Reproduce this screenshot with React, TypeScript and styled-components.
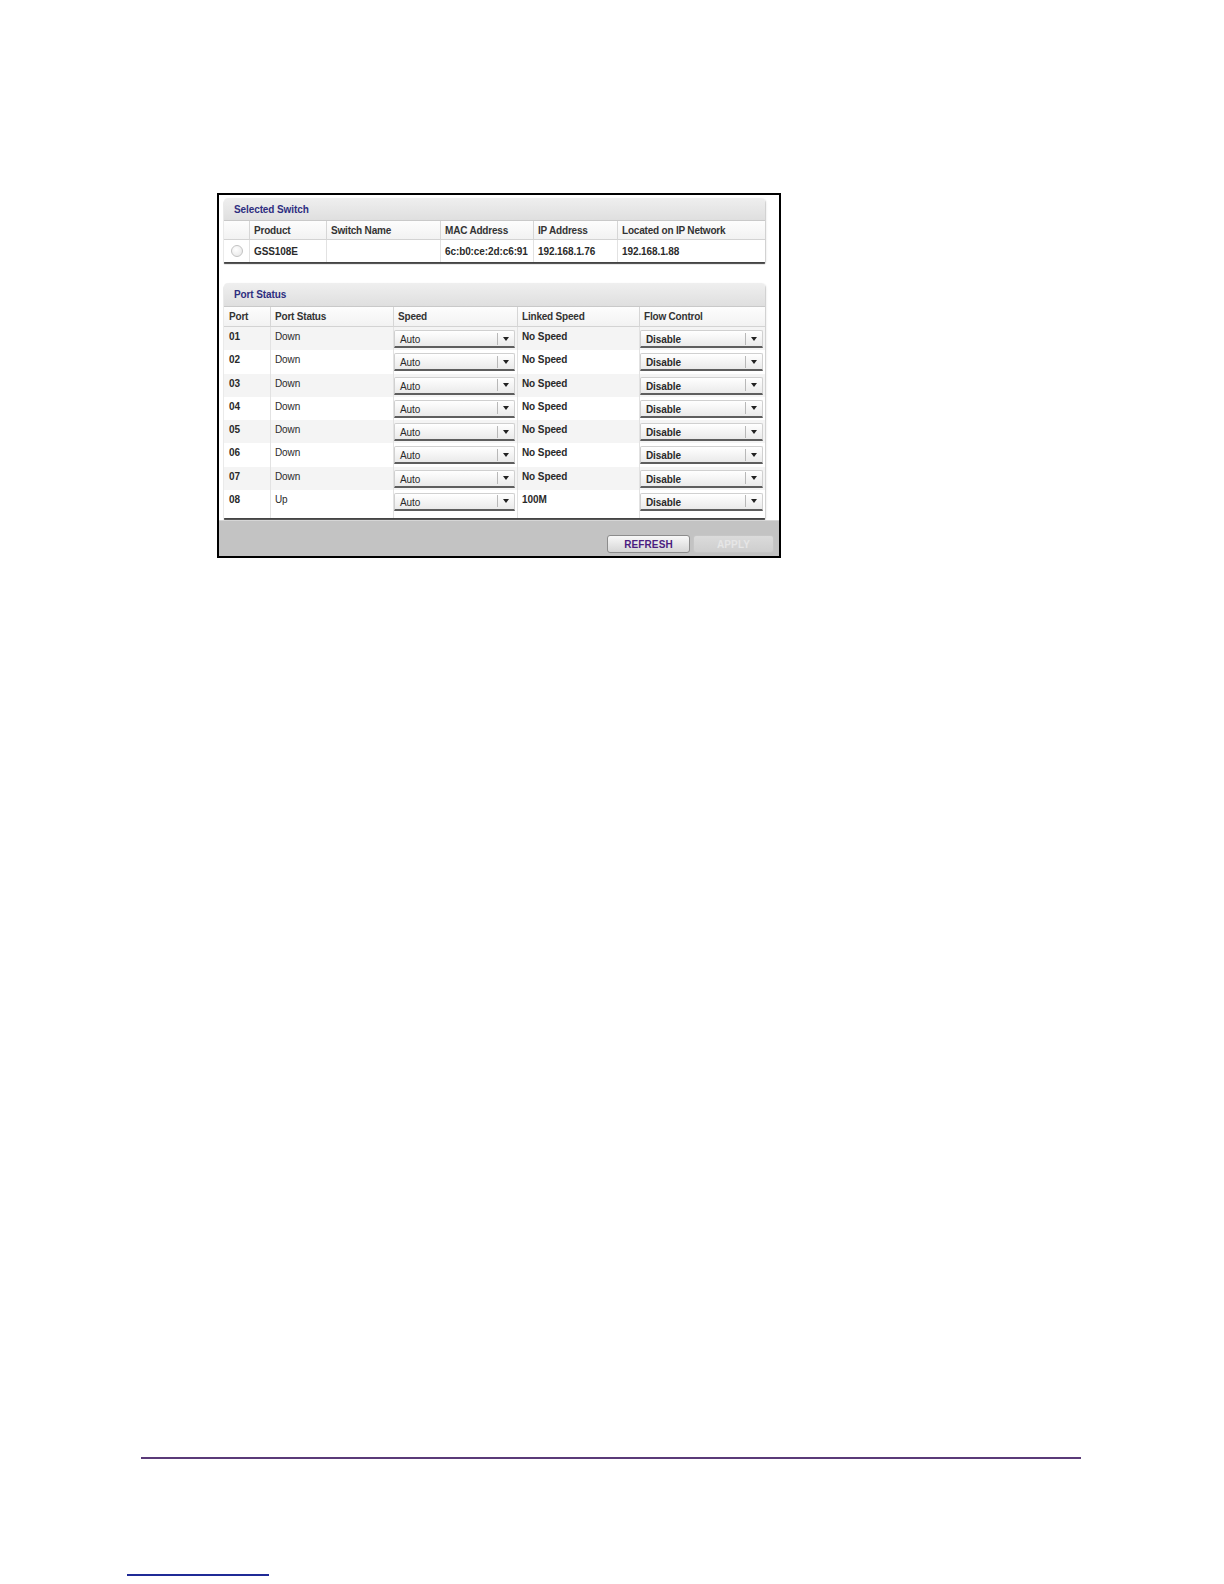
import React from 'react';
import styled, { createGlobalStyle } from 'styled-components';

const GlobalStyle = createGlobalStyle`
  html, body {
    margin: 0;
    padding: 0;
    background: #fff;
  }
  body {
    font-family: 'Liberation Sans', Arial, sans-serif;
  }
`;

const Page = styled.div`
  width: 1224px;
  height: 1584px;
  display: flex;
  flex-direction: column;
  box-sizing: border-box;
  padding-top: 193px;
`;

const Frame = styled.div`
  margin-left: 217px;
  width: 564px;
  height: 365px;
  box-sizing: border-box;
  border: 2px solid #000;
  display: flex;
  flex-direction: column;
  background: #fff;
`;

const Content = styled.div`
  flex: 1;
  display: flex;
  flex-direction: column;
  gap: 21px;
  padding: 3px 14px 0 5px;
`;

const Panel = styled.section`
  border-radius: 4px 4px 0 0;
  background: #fff;
  box-shadow: 0 2px 1px -0.5px rgba(50, 50, 50, 0.9), 1px 1px 2px rgba(0, 0, 0, 0.15);
  overflow: hidden;
`;

const PanelTitle = styled.div<{ $h?: number }>`
  height: ${({ $h }) => $h ?? 23}px;
  box-sizing: border-box;
  display: flex;
  align-items: center;
  padding-left: 10px;
  background: linear-gradient(#efefef, #dfdfdf);
  border-bottom: 1px solid #c9c9c9;
  color: #2e2e80;
  font-size: 10px;
  font-weight: bold;
  letter-spacing: -0.1px;
`;

const Grid = styled.div<{ $cols: string }>`
  display: grid;
  grid-template-columns: ${({ $cols }) => $cols};
`;

const HeadCell = styled.div<{ $first?: boolean; $h?: number }>`
  height: ${({ $h }) => $h ?? 19}px;
  box-sizing: border-box;
  display: flex;
  align-items: center;
  padding-left: ${({ $first }) => ($first ? 5 : 4)}px;
  border-left: ${({ $first }) => ($first ? 'none' : '1px solid #d6d6d6')};
  border-bottom: 1px solid #d3d3d3;
  background: linear-gradient(#fdfdfd, #f2f2f2);
  color: #333;
  font-size: 10px;
  font-weight: bold;
  letter-spacing: -0.2px;
  white-space: nowrap;
`;

const Cell = styled.div<{ $first?: boolean; $shade?: boolean; $bold?: boolean; $h?: number }>`
  height: ${({ $h }) => $h ?? 23.25}px;
  box-sizing: border-box;
  padding: 4px 0 0 ${({ $first }) => ($first ? 5 : 4)}px;
  border-left: ${({ $first }) => ($first ? 'none' : '1px solid #e2e2e2')};
  background: ${({ $shade }) => ($shade ? '#f4f4f4' : '#fff')};
  color: #2a2a2a;
  font-size: 10px;
  font-weight: ${({ $bold }) => ($bold ? 'bold' : 'normal')};
  letter-spacing: -0.1px;
  white-space: nowrap;
`;

const SwitchCell = styled(Cell)`
  height: 22px;
  padding-top: 0;
  display: flex;
  align-items: center;
`;

const RadioCell = styled(SwitchCell)`
  padding-left: 0;
  justify-content: center;
`;

const SelectCell = styled.div<{ $shade?: boolean; $h?: number }>`
  height: ${({ $h }) => $h ?? 23.25}px;
  box-sizing: border-box;
  padding: 3px 2px 0 0;
  border-left: 1px solid #e2e2e2;
  background: ${({ $shade }) => ($shade ? '#f4f4f4' : '#fff')};
`;

const SelectBox = styled.div`
  height: 18px;
  box-sizing: border-box;
  display: flex;
  align-items: center;
  border: 1px solid #d0d0d0;
  border-bottom: 2px solid #5e5e5e;
  border-radius: 2px 2px 0 0;
  background: linear-gradient(#ffffff, #eaeaea);
`;

const SelectText = styled.span<{ $bold?: boolean }>`
  flex: 1;
  padding-left: 5px;
  padding-top: 2px;
  color: #2a2a2a;
  font-size: 10px;
  font-weight: ${({ $bold }) => ($bold ? 'bold' : 'normal')};
  letter-spacing: -0.1px;
`;

const Arrow = styled.span`
  width: 16px;
  height: 12px;
  border-left: 1px solid #b8b8b8;
  display: flex;
  align-items: center;
  justify-content: center;

  &::after {
    content: '';
    width: 0;
    height: 0;
    border-left: 3px solid transparent;
    border-right: 3px solid transparent;
    border-top: 4px solid #222;
  }
`;

const Radio = styled.span`
  width: 10px;
  height: 10px;
  border-radius: 50%;
  border: 1px solid #c2c2c2;
  background: radial-gradient(circle at 40% 35%, #ffffff, #e4e4e4);
`;

const Footer = styled.div`
  height: 36px;
  box-sizing: border-box;
  display: flex;
  justify-content: flex-end;
  align-items: flex-end;
  gap: 3px;
  padding: 0 5px 3px 0;
  background: #c3c3c3;
  border-top: 1px solid #d6d6d6;
`;

const Button = styled.button<{ $disabled?: boolean }>`
  height: 18px;
  padding: 0;
  border: 1px solid ${({ $disabled }) => ($disabled ? '#c6c6c6' : '#8c8c8c')};
  border-radius: 3px;
  background: ${({ $disabled }) =>
    $disabled ? 'linear-gradient(#dbdbdb, #cecece)' : 'linear-gradient(#f8f8f8, #d6d6d6)'};
  color: ${({ $disabled }) => ($disabled ? '#e6e6e6' : '#4b1d80')};
  font-family: 'Liberation Sans', Arial, sans-serif;
  font-size: 10px;
  font-weight: bold;
  letter-spacing: 0.1px;
`;

const RefreshButton = styled(Button)`
  width: 83px;
`;

const ApplyButton = styled(Button)`
  width: 81px;
`;

const PurpleRule = styled.div`
  margin: 899px 0 0 141px;
  width: 940px;
  height: 2px;
  background: #5a3a78;
`;

const BlueRule = styled.div`
  margin: 115px 0 0 127px;
  width: 142px;
  height: 2px;
  background: #1f2a96;
`;

const switchCols = '25px 77px 114px 93px 84px 1fr';
const portCols = '46px 123px 124px 122px 1fr';

const ports = [
  { port: '01', status: 'Down', linked: 'No Speed' },
  { port: '02', status: 'Down', linked: 'No Speed' },
  { port: '03', status: 'Down', linked: 'No Speed' },
  { port: '04', status: 'Down', linked: 'No Speed' },
  { port: '05', status: 'Down', linked: 'No Speed' },
  { port: '06', status: 'Down', linked: 'No Speed' },
  { port: '07', status: 'Down', linked: 'No Speed' },
  { port: '08', status: 'Up', linked: '100M' },
];

const Select = ({ value, bold }: { value: string; bold?: boolean }) => (
  <SelectBox>
    <SelectText $bold={bold}>{value}</SelectText>
    <Arrow />
  </SelectBox>
);

const App = () => {
  return (
    <>
      <GlobalStyle />
      <Page>
        <Frame>
          <Content>
            <Panel>
              <PanelTitle>Selected Switch</PanelTitle>
              <Grid $cols={switchCols}>
                <HeadCell $first />
                <HeadCell>Product</HeadCell>
                <HeadCell>Switch Name</HeadCell>
                <HeadCell>MAC Address</HeadCell>
                <HeadCell>IP Address</HeadCell>
                <HeadCell>Located on IP Network</HeadCell>

                <RadioCell $first>
                  <Radio />
                </RadioCell>
                <SwitchCell $bold>GSS108E</SwitchCell>
                <SwitchCell />
                <SwitchCell $bold>6c:b0:ce:2d:c6:91</SwitchCell>
                <SwitchCell $bold>192.168.1.76</SwitchCell>
                <SwitchCell $bold>192.168.1.88</SwitchCell>
              </Grid>
            </Panel>

            <Panel>
              <PanelTitle $h={24}>Port Status</PanelTitle>
              <Grid $cols={portCols}>
                <HeadCell $first $h={20}>Port</HeadCell>
                <HeadCell $h={20}>Port Status</HeadCell>
                <HeadCell $h={20}>Speed</HeadCell>
                <HeadCell $h={20}>Linked Speed</HeadCell>
                <HeadCell $h={20}>Flow Control</HeadCell>

                {ports.map((p, i) => {
                  const shade = i % 2 === 0;
                  const h = i === ports.length - 1 ? 28 : 23.25;
                  return (
                    <React.Fragment key={p.port}>
                      <Cell $first $shade={shade} $bold $h={h}>
                        {p.port}
                      </Cell>
                      <Cell $shade={shade} $h={h}>
                        {p.status}
                      </Cell>
                      <SelectCell $shade={shade} $h={h}>
                        <Select value="Auto" />
                      </SelectCell>
                      <Cell $shade={shade} $bold $h={h}>
                        {p.linked}
                      </Cell>
                      <SelectCell $shade={shade} $h={h}>
                        <Select value="Disable" bold />
                      </SelectCell>
                    </React.Fragment>
                  );
                })}
              </Grid>
            </Panel>
          </Content>
          <Footer>
            <RefreshButton>REFRESH</RefreshButton>
            <ApplyButton $disabled>APPLY</ApplyButton>
          </Footer>
        </Frame>
        <PurpleRule />
        <BlueRule />
      </Page>
    </>
  );
};

export default App;
